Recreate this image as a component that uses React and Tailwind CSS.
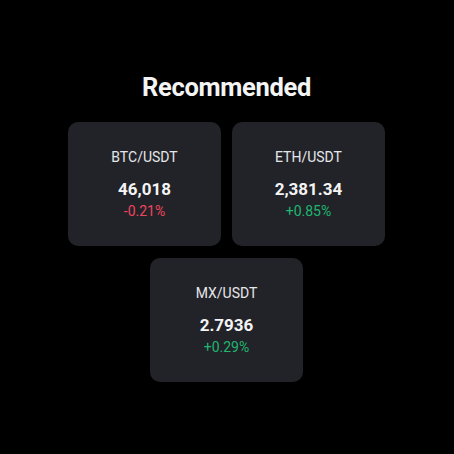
const pairs = [
  { name: 'BTC/USDT', price: '46,018', change: '-0.21%', up: false },
  { name: 'ETH/USDT', price: '2,381.34', change: '+0.85%', up: true },
  { name: 'MX/USDT', price: '2.7936', change: '+0.29%', up: true },
]

function PairCard({ name, price, change, up }) {
  return (
    <div className="w-[153px] h-[124px] rounded-[10px] bg-[#222328] flex flex-col items-center pt-[25px]">
      <div className="text-[14px] leading-[20px] text-[#e6e7ea]">{name}</div>
      <div className="mt-[12px] text-[17px] leading-[20px] font-bold text-[#f4f4f5]">{price}</div>
      <div className={'mt-[3px] text-[14px] leading-[18px] ' + (up ? 'text-[#1fb670]' : 'text-[#f0455e]')}>{change}</div>
    </div>
  )
}

export default function App() {
  return (
    <div className="w-[454px] h-[454px] bg-black flex flex-col items-center pt-[70px] pr-[1px]" style={{ fontFamily: 'Roboto, "Liberation Sans", sans-serif' }}>
      <h1 className="text-[25.5px] leading-[34px] font-bold text-[#f4f4f5] tracking-[-0.3px]">Recommended</h1>
      <div className="mt-[18px] flex flex-wrap justify-center gap-x-[11px] gap-y-[12px] w-[317px]">
        {pairs.map(p => <PairCard key={p.name} {...p} />)}
      </div>
    </div>
  )
}
